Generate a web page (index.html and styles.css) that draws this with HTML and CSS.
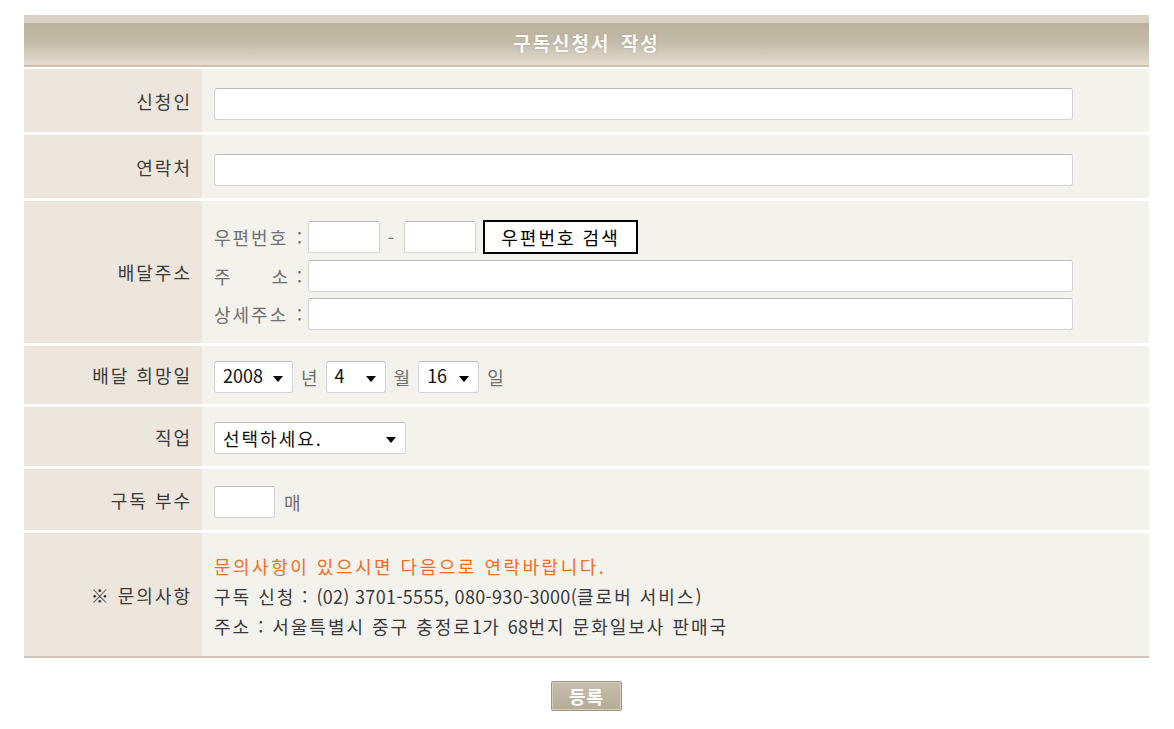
FILE: index.html
```html
<!DOCTYPE html>
<html lang="ko">
<head>
<meta charset="utf-8">
<title>구독신청서 작성</title>
<link rel="stylesheet" href="styles.css">
</head>
<body>
<div class="form">
  <div class="head">구독신청서 작성</div>
  <div class="rows">
    <div class="row r1">
      <div class="lbl">신청인</div>
      <div class="cnt"><input class="txt full" type="text"></div>
    </div>
    <div class="row r2">
      <div class="lbl">연락처</div>
      <div class="cnt"><input class="txt full" type="text"></div>
    </div>
    <div class="row r3">
      <div class="lbl">배달주소</div>
      <div class="cnt addr">
        <div class="line">
          <span class="al"><span>우편번호</span><span>:</span></span>
          <input class="txt zip" type="text">
          <span class="dash">-</span>
          <input class="txt zip" type="text">
          <button class="zipbtn" type="button">우편번호 검색</button>
        </div>
        <div class="line">
          <span class="al"><span>주</span><span>소 :</span></span>
          <input class="txt wide" type="text">
        </div>
        <div class="line">
          <span class="al"><span>상세주소</span><span>:</span></span>
          <input class="txt wide" type="text">
        </div>
      </div>
    </div>
    <div class="row r4">
      <div class="lbl">배달 희망일</div>
      <div class="cnt inl">
        <span class="sel s-year">2008<i class="caret"></i></span>
        <span class="unit">년</span>
        <span class="sel s-mon">4<i class="caret"></i></span>
        <span class="unit">월</span>
        <span class="sel s-day">16<i class="caret"></i></span>
        <span class="unit">일</span>
      </div>
    </div>
    <div class="row r5">
      <div class="lbl">직업</div>
      <div class="cnt inl">
        <span class="sel s-job">선택하세요.<i class="caret"></i></span>
      </div>
    </div>
    <div class="row r6">
      <div class="lbl">구독 부수</div>
      <div class="cnt inl">
        <input class="txt cnt-in" type="text">
        <span class="unit mae">매</span>
      </div>
    </div>
    <div class="row r7">
      <div class="lbl">※ 문의사항</div>
      <div class="cnt info">
        <p class="notice">문의사항이 있으시면 다음으로 연락바랍니다.</p>
        <p>구독 신청 : <span class="num">(02) 3701-5555, 080-930-3000(</span>클로버 서비스)</p>
        <p>주소 : 서울특별시 중구 충정로<span class="num">1</span>가 <span class="num">68</span>번지 문화일보사 판매국</p>
      </div>
    </div>
  </div>
  <div class="foot"><button class="submit" type="button">등록</button></div>
</div>
</body>
</html>
```
FILE: styles.css
```css
html, body {
  margin: 0;
  padding: 0;
  background: #ffffff;
}
body {
  font-family: "Noto Sans CJK KR", "Noto Sans", sans-serif;
  font-size: 18px;
  letter-spacing: 2px;
  color: #3a3a3a;
}
.form {
  width: 1125px;
  margin: 15px 0 0 24px;
}
.head {
  height: 52px;
  box-sizing: border-box;
  border-top: 8px solid #d9d1c4;
  border-bottom: 2px solid #cbc2b1;
  background: linear-gradient(to bottom, #b9b09d 0%, #c3bba9 45%, #e4ddd0 100%);
  color: #fbfaf7;
  font-weight: bold;
  font-size: 19px;
  letter-spacing: 2px;
  word-spacing: 3px;
  text-align: center;
  line-height: 40px;
  margin-bottom: 2px;
  text-shadow: 0 0 2px rgba(150, 140, 120, 0.6);
}
.rows {
  display: flex;
  flex-direction: column;
  gap: 3px;
  border-bottom: 2px solid #cfc6b6;
}
.row {
  display: grid;
  grid-template-columns: 178px 1fr;
}
.r1, .r2 { height: 63px; }
.r3 { height: 142px; }
.r4 { height: 58px; }
.r5 { height: 59px; }
.r6 { height: 61px; }
.r7 { height: 123px; }
.lbl {
  background: #ede6dc;
  display: flex;
  align-items: center;
  justify-content: flex-end;
  padding-right: 10px;
  color: #3a3a3a;
}
.cnt {
  background: #f4f2ed;
  padding-left: 12px;
  display: flex;
  align-items: center;
}
.r1 .cnt, .r2 .cnt { padding-top: 6px; }
.txt {
  box-sizing: border-box;
  height: 32px;
  border: 1px solid #d3d4db;
  border-top-color: #b9bac2;
  border-radius: 3px;
  background: #ffffff;
  margin: 0;
  padding: 0 4px;
  font: inherit;
}
.full { width: 859px; }
.addr {
  flex-direction: column;
  align-items: stretch;
  justify-content: flex-start;
  padding-top: 19px;
  gap: 6px;
}
.line {
  display: flex;
  align-items: center;
  color: #707070;
}
.al {
  display: flex;
  justify-content: space-between;
  width: 90px;
  margin-right: 4px;
  color: #707070;
}
.zip { width: 72px; }
.dash {
  width: 24px;
  text-align: center;
  color: #707070;
}
.zipbtn {
  box-sizing: border-box;
  width: 155px;
  height: 34px;
  margin-left: 7px;
  border: 2px solid #000000;
  background: #ffffff;
  font-family: "Noto Sans CJK KR", sans-serif;
  font-size: 18px;
  color: #000000;
  letter-spacing: 2px;
  padding: 0;
}
.wide { width: 765px; }
.r4 .cnt { padding-top: 3px; }
.r5 .cnt { padding-top: 3px; }
.r6 .cnt { padding-top: 4px; }
.sel {
  position: relative;
  box-sizing: border-box;
  height: 32px;
  display: inline-flex;
  align-items: center;
  padding-left: 8px;
  padding-bottom: 3px;
  background: #ffffff;
  border: 1px solid #d3d4db;
  border-top-color: #b9bac2;
  border-radius: 3px;
  color: #111111;
  letter-spacing: 0;
}
.s-job { letter-spacing: 2px; padding-bottom: 0; }
.caret {
  position: absolute;
  right: 9px;
  top: 14px;
  width: 0;
  height: 0;
  border-left: 5px solid transparent;
  border-right: 5px solid transparent;
  border-top: 6px solid #000000;
}
.s-year { width: 79px; }
.s-mon { width: 60px; }
.s-day { width: 61px; }
.s-job { width: 192px; }
.unit {
  color: #707070;
  margin: 0 6px 0 8px;
}
.cnt-in { width: 61px; }
.mae { margin-left: 9px; }
.info {
  flex-direction: column;
  align-items: flex-start;
  justify-content: center;
  padding-top: 3px;
}
.info p {
  margin: 0;
  line-height: 30px;
  color: #3a3a3a;
}
.info p.notice { color: #f26d1e; letter-spacing: 2.5px; }
.num { letter-spacing: 0.3px; }
.foot {
  display: flex;
  justify-content: center;
  padding-top: 23px;
}
.submit {
  box-sizing: border-box;
  width: 71px;
  height: 30px;
  border: 1px solid #9c937e;
  border-radius: 2px;
  background: linear-gradient(to bottom, #c6beac, #b5ac98);
  color: #ffffff;
  font: bold 18px "Noto Sans CJK KR", sans-serif;
  letter-spacing: 1px;
  padding: 0;
  box-shadow: inset 0 0 0 1px #d6cfbf;
}
```
